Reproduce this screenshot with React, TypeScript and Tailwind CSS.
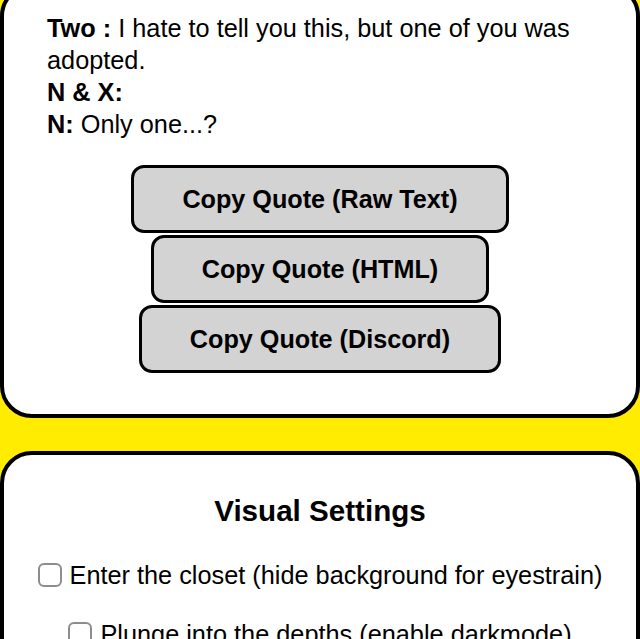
import React from 'react';

// --- Quote card + visual settings ---
const quoteButtons = ['Copy Quote (Raw Text)', 'Copy Quote (HTML)', 'Copy Quote (Discord)'];

const Checkbox: React.FC<{ label: string; className?: string }> = ({ label, className }) => (
  <label className={`flex items-center justify-center gap-[8px] text-[25.3px] leading-[32px] ${className ?? ''}`}>
    <input
      type="checkbox"
      className="appearance-none w-[24px] h-[24px] shrink-0 bg-white border-2 border-[#8d8d8d] rounded-[6px]"
    />
    <span>{label}</span>
  </label>
);

const App: React.FC = () => {
  return (
    <div className="min-h-screen flex flex-col bg-[#ffec00] overflow-hidden text-black font-['Liberation_Sans',Arial,sans-serif]">
      <div className="-mt-[16px] bg-white border-4 border-black rounded-[32px] pt-[24px] pb-[41px] px-[43px]">
        <div className="text-[25.3px] leading-[32px]">
          <p><b>Two :</b> I hate to tell you this, but one of you was adopted.</p>
          <p><b>N &amp; X:</b></p>
          <p><b>N:</b> Only one...?</p>
        </div>
        <div className="mt-[25px] flex flex-col items-center gap-[2px]">
          {quoteButtons.map((b) => (
            <button
              key={b}
              className="bg-[#d3d3d3] border-[3px] border-black rounded-[13px] px-[48px] py-[15px] text-[25.2px] leading-[32px] font-bold"
            >
              {b}
            </button>
          ))}
        </div>
      </div>

      <div className="mt-[33px] bg-white border-4 border-black rounded-[32px] pt-[39px] pb-[40px] px-[20px]">
        <h2 className="text-center font-bold text-[29.6px] leading-[34px]">Visual Settings</h2>
        <Checkbox className="mt-[31px]" label="Enter the closet (hide background for eyestrain)" />
        <Checkbox className="mt-[27px]" label="Plunge into the depths (enable darkmode)" />
      </div>
    </div>
  );
};

export default App;
